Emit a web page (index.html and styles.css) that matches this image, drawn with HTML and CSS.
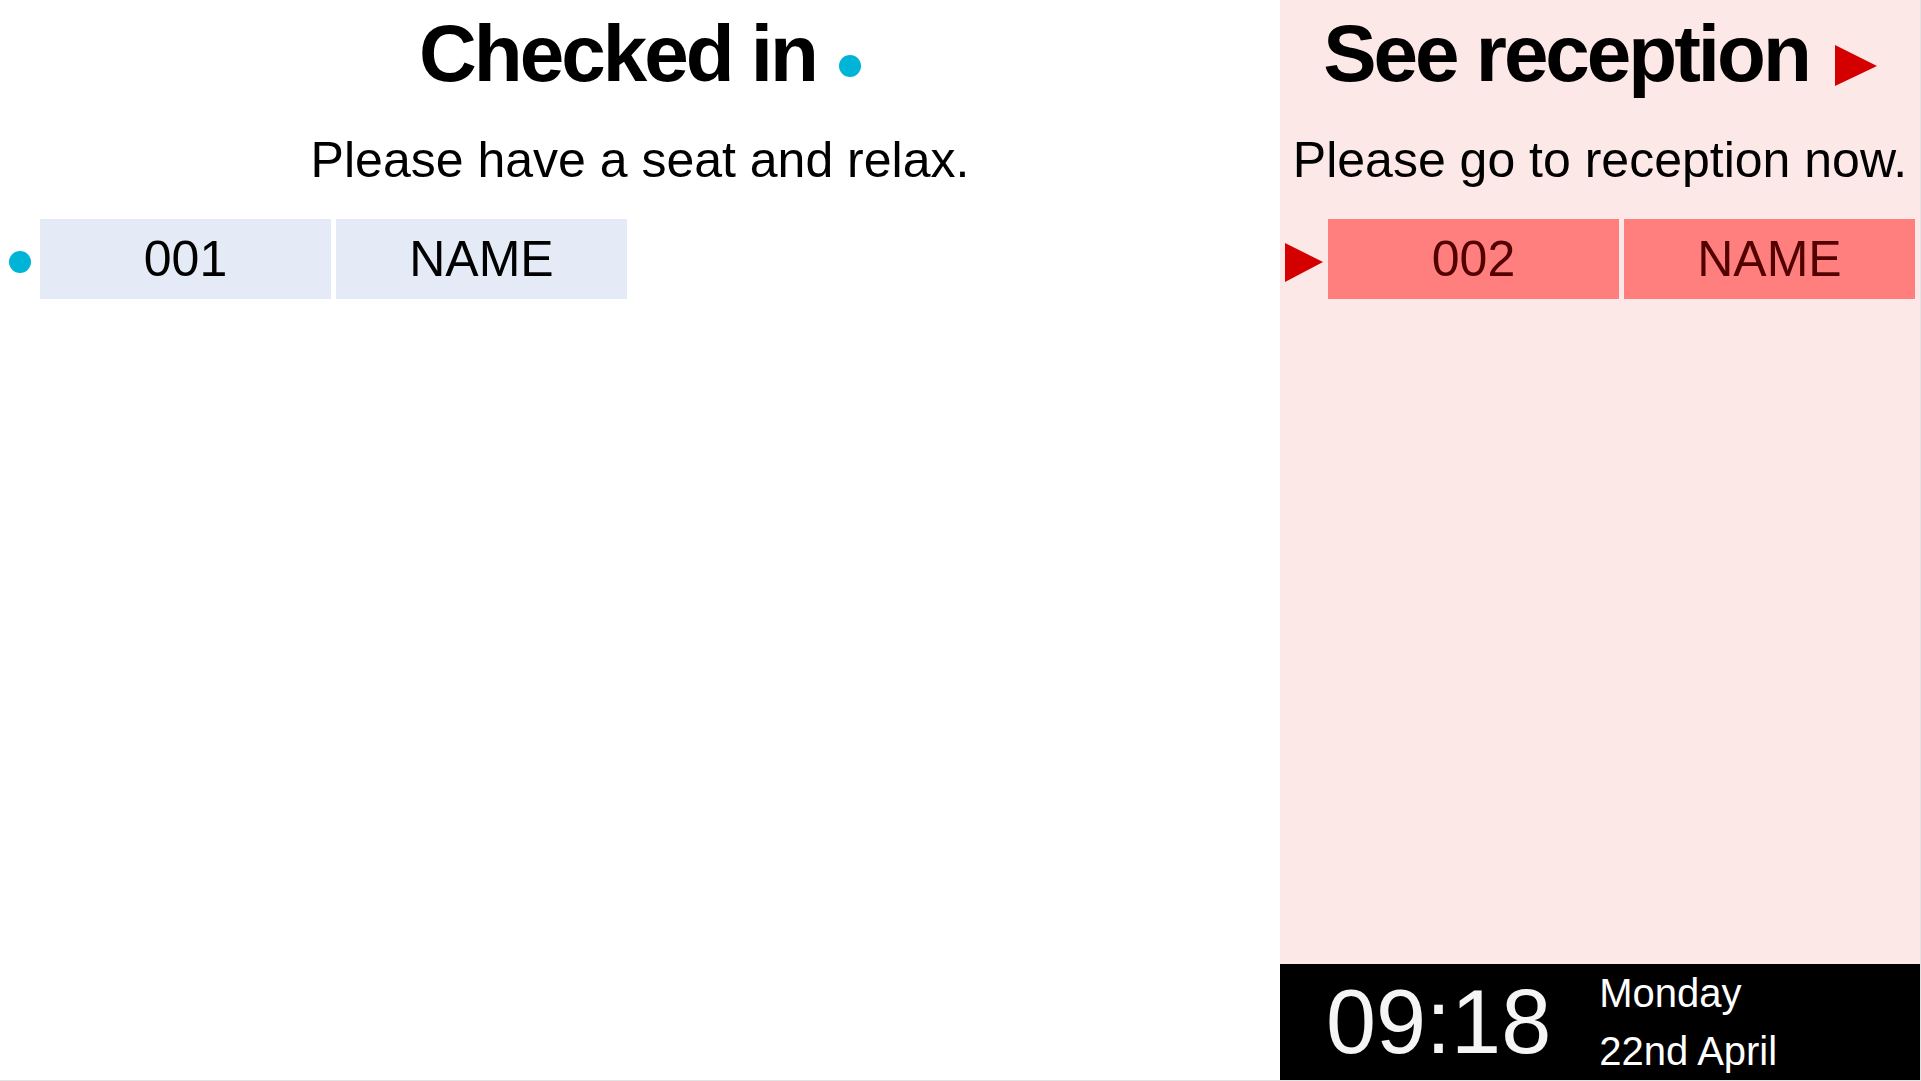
FILE: index.html
```html
<!DOCTYPE html>
<html lang="en">
<head>
    <meta charset="UTF-8">
    <meta name="viewport" content="width=device-width, initial-scale=1.0">
    <title>Waiting Room Board</title>

    <!-- Board styles -->
    <link rel="stylesheet" href="styles.css">
</head>
<body>

    <div class="board">
        <!-- Patients who are checked in and waiting -->
        <div class="panel checked-panel">
            <h1 class="panel-title">Checked in<span class="dot"></span></h1>
            <p class="panel-subtitle">Please have a seat and relax.</p>

            <div class="patient-row">
                <span class="dot row-marker"></span>
                <div class="cell checked-cell">001</div>
                <div class="cell checked-cell">NAME</div>
            </div>
        </div>

        <!-- Patients who need to see reception -->
        <div class="panel reception-panel">
            <h1 class="panel-title">See reception<span class="arrow"></span></h1>
            <p class="panel-subtitle">Please go to reception now.</p>

            <div class="patient-row reception-row">
                <span class="arrow small-arrow row-marker"></span>
                <div class="cell reception-cell">002</div>
                <div class="cell reception-cell">NAME</div>
            </div>

            <div class="clock-bar">
                <div class="clock-time">09:18</div>
                <div class="clock-date">
                    <div>Monday</div>
                    <div>22nd April</div>
                </div>
            </div>
        </div>
    </div>

</body>
</html>
```

FILE: styles.css
```css
html {
    background-color: #e3e3e3;
}

body {
    font-family: "Liberation Sans", Arial, sans-serif;
    margin: 0;
}

.board {
    display: flex;
    width: 1920px;
    height: 1080px;
    overflow: hidden;
}

.panel {
    display: flex;
    flex-direction: column;
}

.checked-panel {
    width: 1280px;
    background-color: white;
}

.reception-panel {
    width: 640px;
    background-color: #fde8e8;
}

.panel-title {
    font-size: 80px;
    font-weight: bold;
    letter-spacing: -3px;
    line-height: 75px;
    text-align: center;
    margin: 16px 0 0 0;
    color: black;
}

.panel-subtitle {
    font-size: 50px;
    line-height: 60px;
    text-align: center;
    margin: 39px 0 0 0;
    color: black;
}

.dot {
    display: inline-block;
    width: 22px;
    height: 22px;
    border-radius: 50%;
    background-color: #00b4d8;
}

.panel-title .dot {
    margin-left: 23px;
    margin-bottom: 4px;
}

.arrow {
    display: inline-block;
    width: 0;
    height: 0;
    border-left: 42px solid #d40000;
    border-top: 21px solid transparent;
    border-bottom: 20px solid transparent;
}

.panel-title .arrow {
    margin-left: 26px;
    vertical-align: -5px;
}

.small-arrow {
    border-left-width: 38px;
    border-top-width: 19px;
    border-bottom-width: 20px;
}

.patient-row {
    display: flex;
    align-items: center;
    gap: 5px;
    margin-top: 29px;
    padding-left: 9px;
}

.patient-row .dot {
    margin-right: 4px;
}

.row-marker {
    margin-top: 6px;
}

.reception-row {
    padding-left: 5px;
}

.cell {
    width: 291px;
    height: 80px;
    font-size: 50px;
    line-height: 80px;
    text-align: center;
}

.checked-cell {
    background-color: #e4eaf6;
    color: black;
}

.reception-cell {
    background-color: #ff7f7f;
    color: #520000;
}

.clock-bar {
    margin-top: auto;
    height: 116px;
    background-color: black;
    display: flex;
    align-items: center;
    gap: 48px;
    padding-left: 46px;
}

.clock-time {
    font-size: 90px;
    line-height: 1;
    color: #f5f5f5;
}

.clock-date {
    font-size: 40px;
    line-height: 58px;
    color: white;
}
```
